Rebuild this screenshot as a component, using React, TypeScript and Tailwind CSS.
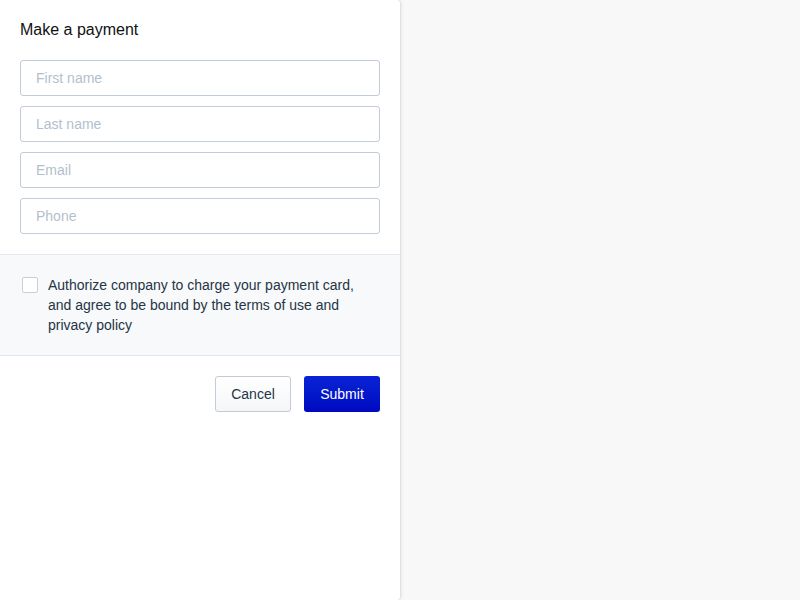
import React from "react";

export default function App() {
  const fields = ["First name", "Last name", "Email", "Phone"];
  return (
    <div
      className="w-[800px] h-[600px] bg-[#f8f8f8] flex"
      style={{ fontFamily: '"Liberation Sans", Arial, sans-serif' }}
    >
      <div className="w-[401px] h-[600px] bg-white border-r border-[#e1e1e1] rounded-r-[4px] shadow-[1px_0_3px_rgba(0,0,0,0.06)] flex flex-col">
        <div className="px-5 pt-5 pb-5">
          <h1 className="text-[16px] leading-[20px] text-[#111111]">Make a payment</h1>
          <div className="mt-5 flex flex-col gap-[10px]">
            {fields.map((f) => (
              <input
                key={f}
                placeholder={f}
                className="h-9 w-full rounded-[3px] border border-[#c1ccd9] px-[15px] text-[14px] text-[#1f2d3d] placeholder:text-[#b4bfcc] outline-none"
              />
            ))}
          </div>
        </div>
        <div className="border-y border-[#e3e8ee] bg-[#f7f9fb] pl-[22px] pr-5 py-5 flex gap-[10px]">
          <div className="mt-[2px] w-4 h-4 shrink-0 rounded-[2px] border border-[#c8d0d9] bg-white" />
          <p className="text-[14px] leading-[20px] text-[#263445]">
            Authorize company to charge your payment card, and agree to be bound by the terms of use and privacy policy
          </p>
        </div>
        <div className="px-5 pt-5 flex justify-end gap-[13px]">
          <button className="h-9 w-[76px] rounded-[3px] border border-[#c3ccd6] bg-gradient-to-b from-white to-[#f4f6f8] text-[14px] text-[#263445]">
            Cancel
          </button>
          <button className="h-9 w-[76px] rounded-[3px] bg-gradient-to-b from-[#0a23d6] to-[#0008bf] text-[14px] text-white">
            Submit
          </button>
        </div>
      </div>
    </div>
  );
}
